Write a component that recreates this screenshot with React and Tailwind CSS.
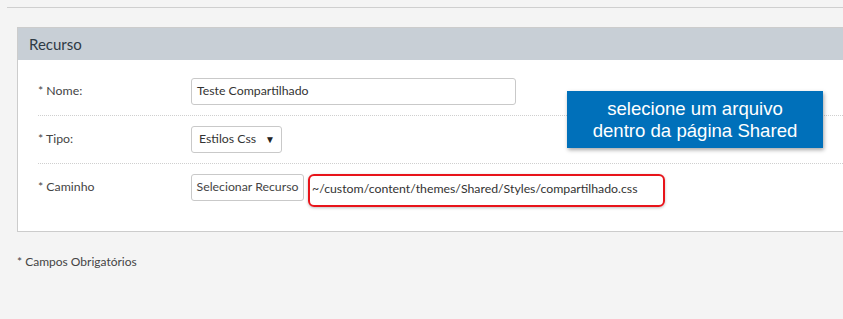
export default function App() {
  return (
    <div className="relative w-[843px] h-[319px] bg-[#f4f4f4] overflow-hidden text-[#333] font-['Source_Sans_Pro','Lato',sans-serif]">
      <div className="pt-[7px] pl-[7px]">
        <div className="h-px bg-[#cfcfcf]" />
      </div>

      <div className="mt-[19px] ml-[17px] -mr-px border border-[#cccccc] bg-white">
        <div className="h-[32px] bg-[#c8cfd6] pl-[11px] flex items-center text-[15px] text-[#2f3a45]">
          Recurso
        </div>

        <div className="pl-[20px] pt-[18px] pb-[30px] text-[12.3px]">
          <div className="flex items-center h-[27px]">
            <div className="w-[153px] text-[#444]">* Nome:</div>
            <div className="w-[325px] h-[27px] border border-[#c9c9c9] rounded-[3px] flex items-center px-[5px] text-[#333]">
              Teste Compartilhado
            </div>
          </div>
          <div className="mt-[10px] border-t border-dotted border-[#cfcfcf]" />

          <div className="mt-[10px] flex items-center h-[27px]">
            <div className="w-[153px] text-[#444]">* Tipo:</div>
            <div className="w-[91px] h-[27px] border border-[#c9c9c9] rounded-[3px] flex items-center justify-between pl-[7px] pr-[6px] text-[#333]">
              <span>Estilos Css</span>
              <span className="text-[10px] text-[#222]">▼</span>
            </div>
          </div>
          <div className="mt-[10px] border-t border-dotted border-[#cfcfcf]" />

          <div className="mt-[10px] flex items-center h-[27px]">
            <div className="w-[153px] text-[#444]">* Caminho</div>
            <div className="w-[113px] h-[27px] border border-[#c9c9c9] rounded-[3px] flex items-center justify-center text-[#444] bg-white">
              Selecionar Recurso
            </div>
            <div className="ml-[4px] mt-[6px] w-[357px] h-[33px] border-2 border-[#e8141a] rounded-[6px] flex items-start pt-[4px] pl-[2px] text-[#333] shadow-[0_1px_3px_rgba(0,0,0,0.25)]">
              ~/custom/content/themes/Shared/Styles/compartilhado.css
            </div>
          </div>
        </div>
      </div>

      <div className="mt-[21px] ml-[17px] text-[12px] text-[#444]">* Campos Obrigatórios</div>

      <div className="absolute left-[567px] top-[91px] w-[256px] h-[57px] bg-[#0070ba] shadow-[1px_2px_4px_rgba(0,0,0,0.35)] flex flex-col items-center justify-center text-white text-[18.6px] leading-[22px] font-['Liberation_Sans',Arial,sans-serif]">
        <div>selecione um arquivo</div>
        <div>dentro da página Shared</div>
      </div>
    </div>
  );
}
